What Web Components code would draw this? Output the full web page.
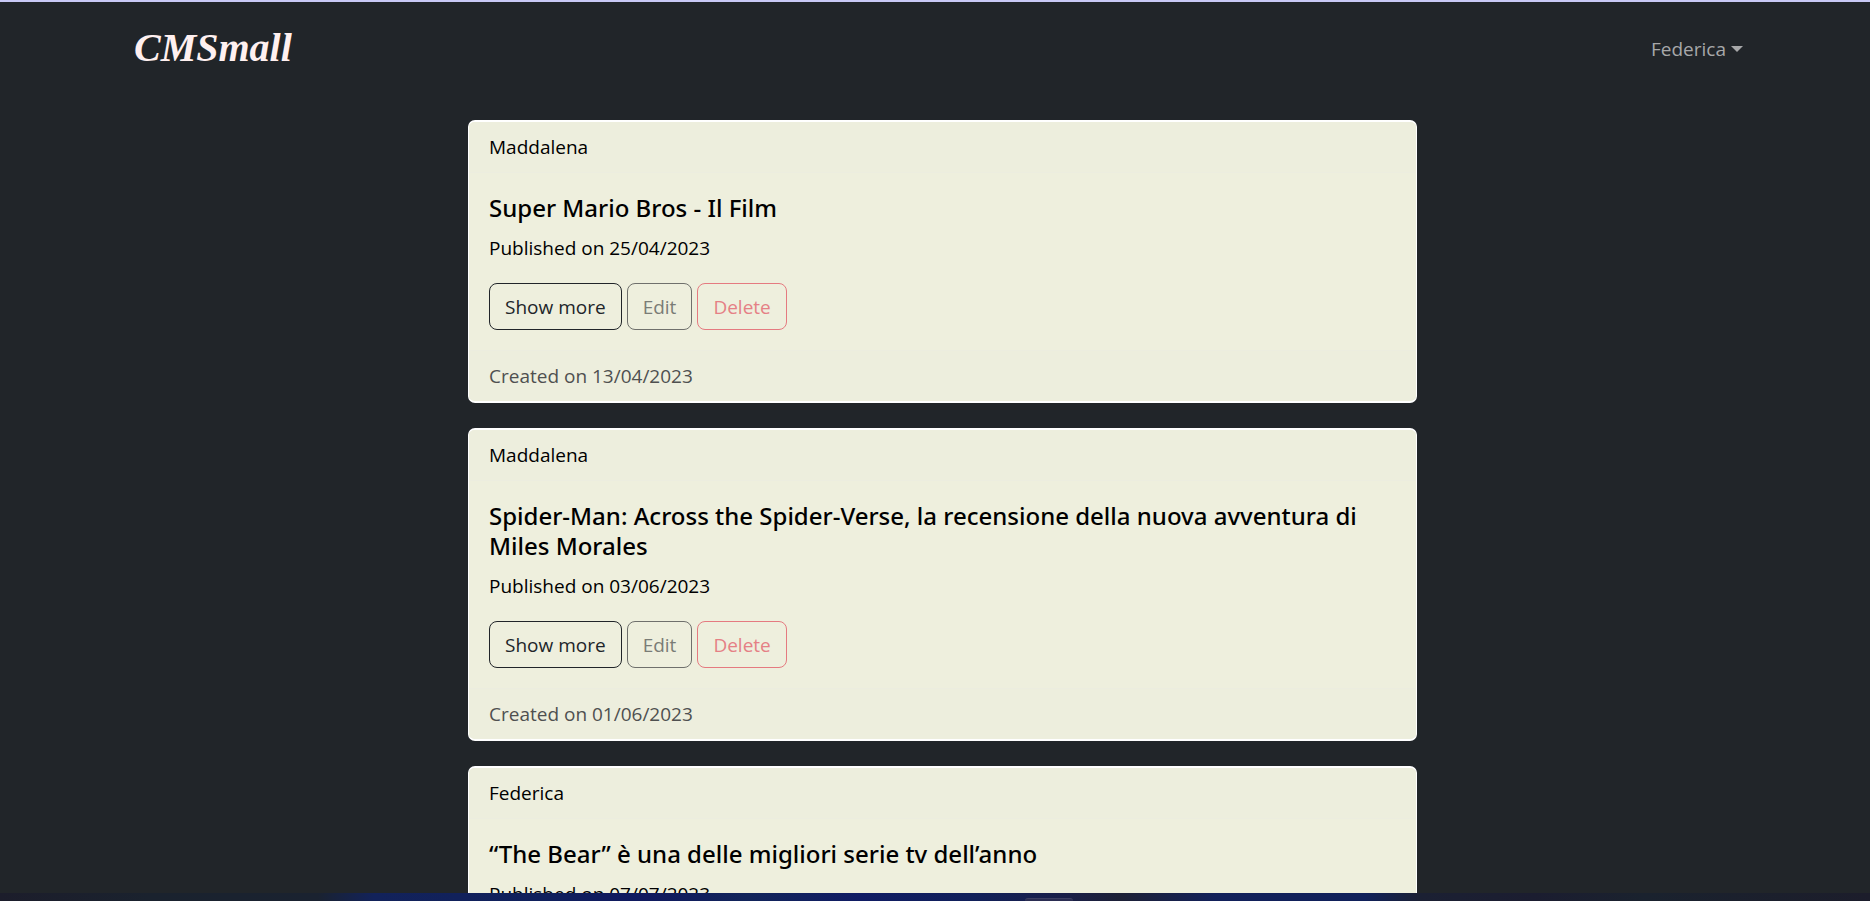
<!DOCTYPE html>
<html lang="it">
<head>
<meta charset="utf-8">
<title>CMSmall</title>
<style>
  html, body { margin: 0; height: 100%; }
  body {
    background: #212529;
    color: #000;
    font: 19px/30px "Segoe UI", "Open Sans", sans-serif;
  }
</style>
</head>
<body>
<cms-desktop>
  <cms-navbar user="Federica">CMSmall</cms-navbar>
  <cms-page-list>
    <cms-page-card>
      <span slot="author">Maddalena</span>
      <span slot="title">Super Mario Bros - Il Film</span>
      <span slot="published">Published on 25/04/2023</span>
      <cms-actions slot="actions"></cms-actions>
      <span slot="created">Created on 13/04/2023</span>
    </cms-page-card>
    <cms-page-card>
      <span slot="author">Maddalena</span>
      <span slot="title">Spider-Man: Across the Spider-Verse, la recensione della nuova avventura di Miles Morales</span>
      <span slot="published">Published on 03/06/2023</span>
      <cms-actions slot="actions"></cms-actions>
      <span slot="created">Created on 01/06/2023</span>
    </cms-page-card>
    <cms-page-card>
      <span slot="author">Federica</span>
      <span slot="title">“The Bear” è una delle migliori serie tv dell’anno</span>
      <span slot="published">Published on 07/07/2023</span>
    </cms-page-card>
  </cms-page-list>
</cms-desktop>

<script>
const define = (name, html, setup) => {
  const template = document.createElement('template');
  template.innerHTML = html;
  customElements.define(name, class extends HTMLElement {
    constructor() {
      super();
      this.attachShadow({ mode: 'open' }).append(template.content.cloneNode(true));
    }
    connectedCallback() { if (setup) setup(this); }
  });
};

/* Window frame: browser edge on top, scrolling page, top of the taskbar below */
define('cms-desktop', `
  <style>
    :host { display: flex; flex-direction: column; height: 100vh; overflow: hidden; }
    .edge { flex: none; height: 2px; background: #c8c9f5; }
    main { flex: 1; min-height: 0; overflow: hidden; }
    .taskbar {
      flex: none; height: 8px; display: flex; align-items: flex-end;
      background: linear-gradient(90deg, #1c1d2b 0%, #1a222e 8%, #1a2230 17%, #12225a 20%, #10205c 29%,
        #10195f 34%, #12245a 40%, #101c64 46%, #11205a 52%, #1a1f48 57%, #1d2036 60%, #12205a 65%, #10205a 73%,
        #1b2033 76%, #1b1d30 82%, #1a222e 88%, #1c1d2b 100%);
    }
    .task {
      box-sizing: border-box; width: 48px; height: 3px; margin-left: 54.8%;
      background: #2b2d52; border-top: 1px solid #3d3f62; border-radius: 4px 4px 0 0;
    }
  </style>
  <div class="edge"></div>
  <main><slot></slot></main>
  <div class="taskbar"><div class="task"></div></div>
`);

define('cms-navbar', `
  <style>
    :host { display: block; }
    nav {
      display: flex; align-items: center; justify-content: space-between; box-sizing: border-box;
      max-width: 1650px; height: 93px; margin: 0 auto; padding: 0 17px 0 24px;
    }
    a {
      padding-bottom: 2px; color: #fff0f0; text-decoration: none;
      font: italic bold 40px/60px "Liberation Serif", "Times New Roman", serif;
    }
    button {
      display: flex; align-items: center; gap: 5px; padding: 0; border: 0; background: none;
      color: #a7a8a9; font: inherit;
    }
    .caret { border: 6px solid transparent; border-top-color: currentColor; border-bottom: 0; }
  </style>
  <nav>
    <a href="#"><slot></slot></a>
    <button type="button" aria-haspopup="true"><span class="user"></span><span class="caret"></span></button>
  </nav>
`, el => { el.shadowRoot.querySelector('.user').textContent = el.getAttribute('user'); });

define('cms-page-list', `
  <style>
    :host {
      display: grid; grid-template-columns: minmax(0, 949px); justify-content: center; row-gap: 25px;
      box-sizing: border-box; max-width: 1650px; margin: 0 auto; padding: 25px 0 25px 15px;
    }
  </style>
  <slot></slot>
`);

define('cms-page-card', `
  <style>
    :host {
      display: block; overflow: hidden; background: #eeefdd;
      border: solid #fff; border-width: 2px 1px; border-radius: 7px;
    }
    header, footer { padding: 10px 20px; background: #edeedd; }
    header { border-bottom: 1px solid #eceddf; }
    footer { border-top: 1px solid #eceddf; color: #4f5050; }
    .body { padding: 20px; }
    h5 { margin: 0 0 10px; font: 500 24px/30px "Segoe UI", "Noto Sans", sans-serif; }
    p { margin: 0 0 20px; }
  </style>
  <header><slot name="author"></slot></header>
  <div class="body">
    <h5><slot name="title"></slot></h5>
    <p><slot name="published"></slot></p>
    <slot name="actions"></slot>
  </div>
  <footer><slot name="created"></slot></footer>
`);

define('cms-actions', `
  <style>
    :host { display: flex; gap: 5px; }
    button {
      height: 47px; padding: 0 15px; background: none; border: 1px solid; border-radius: 8px;
      color: #212529; font: inherit; white-space: nowrap;
    }
    .edit { color: #7a7c76; border-color: #6f706c; }
    .delete { color: #e58085; border-color: #e57a80; }
  </style>
  <button type="button">Show more</button>
  <button type="button" class="edit" disabled>Edit</button>
  <button type="button" class="delete" disabled>Delete</button>
`);
</script>
</body>
</html>
